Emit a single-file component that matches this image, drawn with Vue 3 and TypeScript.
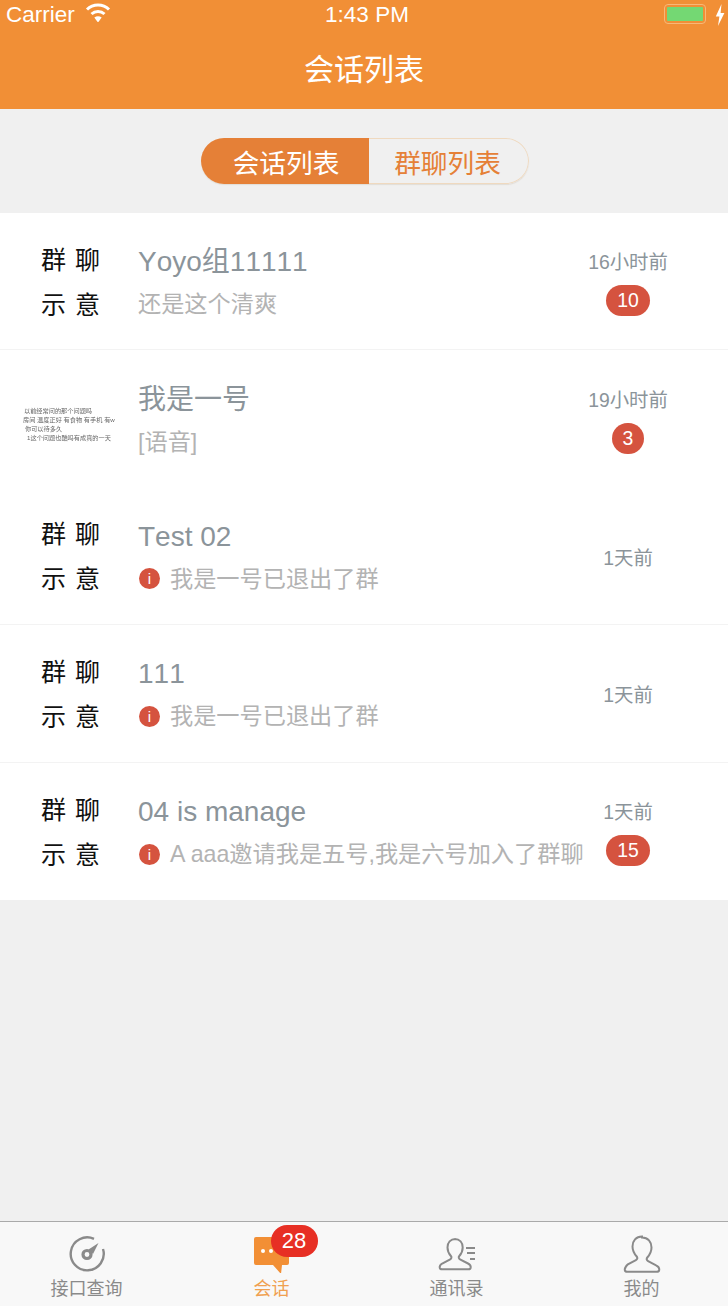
<script setup lang="ts">
interface Row {
  kind: 'group' | 'thumb'
  title: string
  sub: string
  warn: boolean
  time: string
  badge?: string
}
const rows: Row[] = [
  { kind: 'group', title: 'Yoyo组11111', sub: '还是这个清爽', warn: false, time: '16小时前', badge: '10' },
  { kind: 'thumb', title: '我是一号', sub: '[语音]', warn: false, time: '19小时前', badge: '3' },
  { kind: 'group', title: 'Test 02', sub: '我是一号已退出了群', warn: true, time: '1天前' },
  { kind: 'group', title: '111', sub: '我是一号已退出了群', warn: true, time: '1天前' },
  { kind: 'group', title: '04 is manage', sub: 'A aaa邀请我是五号,我是六号加入了群聊', warn: true, time: '1天前', badge: '15' },
]
const thumbLines = ['以前经常问的那个问题吗', '房间 温度正好 有食物 有手机 有w', '你可以待多久', '1这个问题也酷吗有成真的一天']
</script>

<template>
  <div class="page">
    <header class="head">
      <div class="status">
        <div class="status-left">
          <span>Carrier</span>
          <svg width="26" height="20" viewBox="0 0 26 20" fill="none" stroke="#fff" stroke-width="3">
            <path d="M2 7.500a15.500 15.500 0 0 1 22 0" />
            <path d="M6.500 12a9.500 9.500 0 0 1 13 0" />
            <path d="M13 20.500 9.300 15.600a6 6 0 0 1 7.400 0z" fill="#fff" stroke="none" />
          </svg>
        </div>
        <span class="clock">1:43 PM</span>
        <div class="status-right">
          <span class="battery"><i class="battery-fill"></i></span>
          <svg width="10" height="22" viewBox="0 0 10 22"><path d="M6.500 0 .8 12.500h3.600L3 22l6.400-13H5.600z" fill="#fff" /></svg>
        </div>
      </div>
      <div class="nav-title">会话列表</div>
    </header>

    <div class="segment-wrap">
      <div class="segment">
        <div class="seg seg-on">会话列表</div>
        <div class="seg seg-off">群聊列表</div>
      </div>
    </div>

    <ul class="list">
      <li v-for="(row, i) in rows" :key="i" class="row">
        <div class="avatar">
          <template v-if="row.kind === 'group'">
            <div class="av-line"><span>群</span><span>聊</span></div>
            <div class="av-line"><span>示</span><span>意</span></div>
          </template>
          <div v-else class="thumb">
            <div v-for="(line, j) in thumbLines" :key="j" class="thumb-line" :class="'t' + j">{{ line }}</div>
          </div>
        </div>
        <div class="body">
          <div class="title">{{ row.title }}</div>
          <div class="sub">
            <span v-if="row.warn" class="warn">i</span>
            <span>{{ row.sub }}</span>
          </div>
        </div>
        <div class="meta">
          <div class="time">{{ row.time }}</div>
          <div v-if="row.badge" class="badge">{{ row.badge }}</div>
        </div>
      </li>
    </ul>

    <div class="spacer"></div>

    <nav class="tabs">
      <div class="tab">
        <svg class="ico" width="38" height="38" viewBox="0 0 38 38" fill="none" stroke="#8a8a8a">
          <path d="M26 3.800A16.500 16.500 0 1 0 35 14" stroke-width="2.400" />
          <circle cx="19" cy="19.500" r="4" stroke-width="3.200" />
          <path d="M20.500 14.500 30.500 8 25 19z" fill="#8a8a8a" stroke="none" />
        </svg>
        <span>接口查询</span>
      </div>
      <div class="tab tab-on">
        <div class="chat-holder">
          <svg class="ico" width="38" height="38" viewBox="0 0 38 38">
            <path d="M3 2h31a2 2 0 0 1 2 2v24a2 2 0 0 1-2 2h-5l-1 9-8-9H3a2 2 0 0 1-2-2V4a2 2 0 0 1 2-2z" fill="#f28f35" />
            <circle cx="10" cy="16" r="2" fill="#fff" />
            <circle cx="18" cy="16" r="2" fill="#fff" />
          </svg>
          <span class="tab-badge">28</span>
        </div>
        <span>会话</span>
      </div>
      <div class="tab">
        <svg class="ico" width="38" height="38" viewBox="0 0 38 38" fill="none" stroke="#8a8a8a" stroke-width="2">
          <path d="M17.500 4c-5 0-8 3.500-8 8.500 0 3.500 1.600 6.500 3.400 8.500 1 1.200.6 2.600-.7 3.300l-8 4.200C2.500 29.500 1.500 31 1.700 32.500c.2 1.200 1 1.800 2.300 1.800h26.500c1.300 0 2-.6 2.200-1.800.2-1.500-.7-3-2.700-4l-8-4.200c-1.300-.7-1.700-2.100-.7-3.300 1.800-2 3.400-5 3.400-8.500 0-5-3-8.500-8-8.500z" />
          <path d="M28 13h9M29 18h8M32 24h5" stroke-width="1.800" />
        </svg>
        <span>通讯录</span>
      </div>
      <div class="tab">
        <svg class="ico" width="38" height="38" viewBox="0 0 38 38" fill="none" stroke="#8a8a8a" stroke-width="2">
          <path d="M19 1.500c-6 0-9.500 4.300-9.500 10 0 4.500 2 7.500 4.200 10 1.100 1.300.6 2.900-.8 3.600l-8 4.200C2.800 31.300 1.500 33 1.800 35c.2 1.200 1 1.800 2.500 1.800h29.400c1.500 0 2.300-.6 2.500-1.800.3-2-1-3.700-3.100-4.700l-8-4.200c-1.400-.7-1.900-2.300-.8-3.600 2.200-2.500 4.200-5.500 4.200-10 0-5.700-3.500-10-9.500-10z" />
        </svg>
        <span>我的</span>
      </div>
    </nav>
  </div>
</template>

<style>
html, body { margin: 0; padding: 0; }
</style>

<style scoped>
.page {
  width: 728px;
  height: 1306px;
  display: flex;
  flex-direction: column;
  background: #f0f0f0;
  font-family: "Liberation Sans", "Noto Sans CJK SC", sans-serif;
  overflow: hidden;
}
.head {
  height: 109px;
  background: #f18f36;
  color: #fff;
  display: flex;
  flex-direction: column;
  flex: none;
}
.status {
  height: 29px;
  padding: 0 3px 0 6px;
  display: grid;
  grid-template-columns: 1fr auto 1fr;
  align-items: center;
  font-size: 22.500px;
}
.status-left { display: flex; align-items: center; gap: 10px; }
.status-left svg { margin-top: -6px; }
.clock { font-size: 22.500px; margin-left: 3px; }
.status-right { display: flex; justify-content: flex-end; align-items: center; gap: 9px; }
.battery {
  width: 36px;
  height: 14px;
  border: 1.500px solid #f7b878;
  border-radius: 4px;
  padding: 2px;
  display: flex;
  box-sizing: content-box;
  margin-top: -2px;
}
.battery-fill { flex: 1; background: #74d873; border-radius: 1px; }
.nav-title {
  flex: 1;
  display: flex;
  align-items: center;
  justify-content: center;
  font-size: 30px;
  padding-bottom: 5px;
}
.segment-wrap {
  height: 104px;
  display: flex;
  justify-content: center;
  padding: 29px 0 0 2px;
  box-sizing: border-box;
  flex: none;
}
.segment {
  width: 328px;
  height: 46px;
  display: flex;
  border-radius: 23px;
  overflow: hidden;
  font-size: 26.700px;
  box-shadow: 0 1px 1px #e2ddd6;
}
.seg {
  flex: none;
  display: flex;
  align-items: center;
  justify-content: center;
  box-sizing: border-box;
}
.seg-on { width: 168px; background: #e58037; color: #fff; padding-left: 2px; }
.seg-off {
  width: 160px;
  color: #e58037;
  border: 1px solid #efd9bf;
  border-left: none;
  border-radius: 0 23px 23px 0;
  padding-right: 2px;
}
.list {
  list-style: none;
  margin: 0;
  padding: 0;
  background: #fff;
  flex: none;
}
.row {
  height: 137.400px;
  display: flex;
  align-items: center;
  box-sizing: border-box;
  padding-left: 41px;
  border-bottom: 1px solid #f3f3f3;
}
.row:nth-child(2) { border-bottom-color: #fff; }
.row:last-child { border-bottom: none; }
.avatar {
  width: 59px;
  flex: none;
  margin: 2px 38px 0 0;
  display: flex;
  flex-direction: column;
  gap: 13px;
  color: #111;
  font-size: 25px;
  line-height: 32px;
}
.av-line { display: flex; justify-content: space-between; }
.thumb {
  margin: 8px 0 0 -18px;
  width: 100px;
  font-size: 6.200px;
  line-height: 9px;
  color: #666;
  white-space: nowrap;
  filter: blur(0.3px);
}
.t0 { margin-left: 1px; }
.t2 { margin-left: 2px; }
.t3 { margin-left: 4px; }
.body {
  width: 449px;
  flex: none;
  display: flex;
  flex-direction: column;
  gap: 11px;
  margin-top: 3px;
}
.title {
  font-size: 28px;
  line-height: 32px;
  color: #8b949a;
  white-space: nowrap;
  font-kerning: none;
}
.sub {
  display: flex;
  align-items: center;
  gap: 10px;
  font-size: 23.200px;
  line-height: 30px;
  color: #b3b3b3;
  white-space: nowrap;
}
.warn {
  width: 21px;
  height: 21px;
  flex: none;
  margin-left: 1px;
  border-radius: 50%;
  background: #d5533f;
  color: #fff;
  font-size: 15px;
  line-height: 21px;
  text-align: center;
}
.meta {
  width: 82px;
  flex: none;
  display: flex;
  flex-direction: column;
  align-items: center;
  gap: 11px;
  margin: 4px 0 0 0;
}
.time {
  font-size: 19.400px;
  line-height: 24px;
  color: #8b949a;
  white-space: nowrap;
}
.badge {
  height: 31px;
  padding: 0 11px;
  box-sizing: border-box;
  border-radius: 16px;
  background: #d5533f;
  color: #fff;
  font-size: 19.400px;
  line-height: 30px;
  text-align: center;
}
.spacer { flex: 1; }
.tabs {
  flex: none;
  height: 85px;
  box-sizing: border-box;
  border-top: 1px solid #aaa;
  background: #f8f8f8;
  display: grid;
  grid-template-columns: repeat(4, 185px);
  justify-content: center;
}
.tab {
  display: flex;
  flex-direction: column;
  align-items: center;
  padding-top: 13px;
  font-size: 18px;
  line-height: 22px;
  color: #8a8a8a;
  gap: 5px;
}
.ico { display: block; }
.tab-on { color: #f0a050; }
.chat-holder { position: relative; width: 38px; height: 38px; }
.tab-badge {
  position: absolute;
  left: 18px;
  top: -10px;
  width: 47px;
  height: 32px;
  border-radius: 16px;
  background: #e72f24;
  color: #fff;
  font-size: 22px;
  line-height: 32px;
  text-align: center;
}
</style>
